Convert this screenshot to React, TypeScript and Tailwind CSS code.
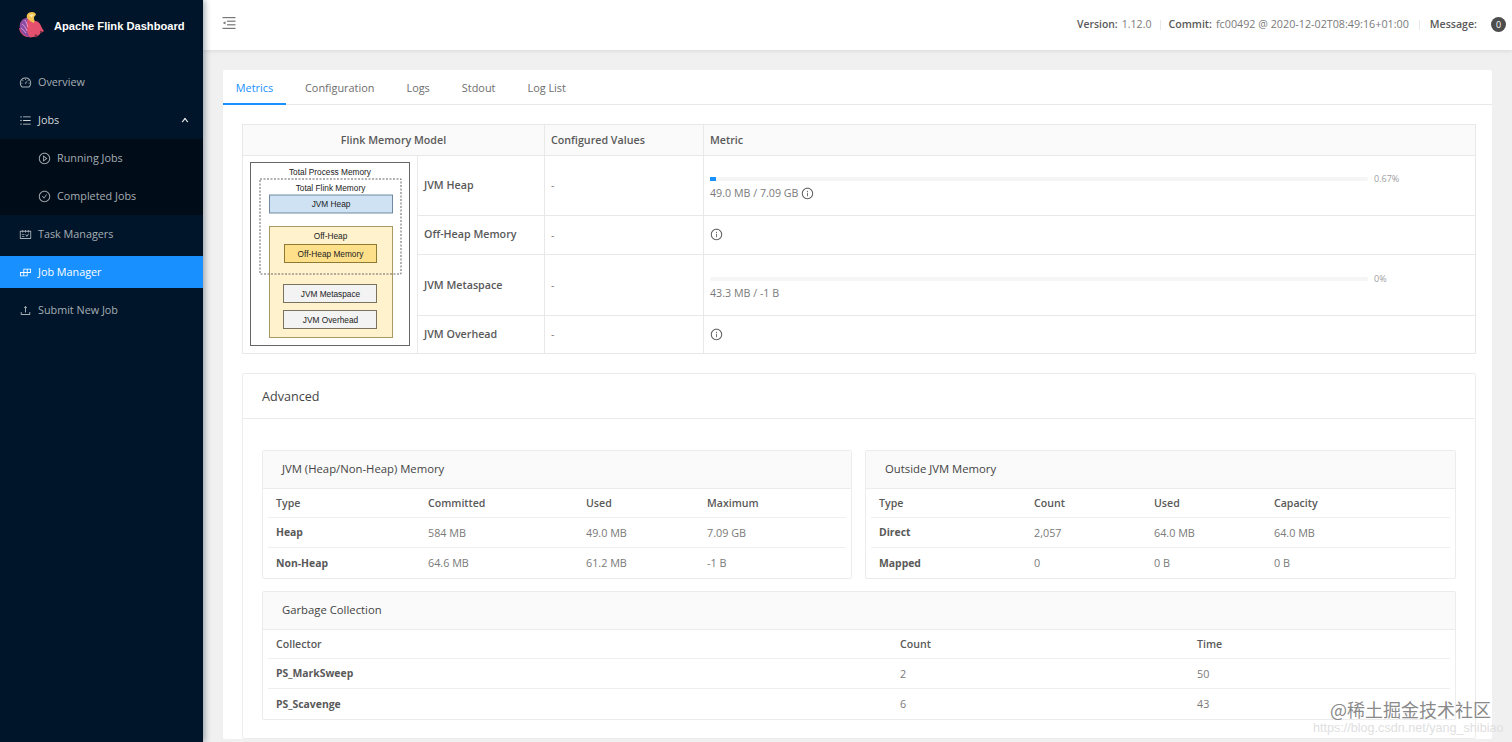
import {
  AiOutlineDashboard,
  AiOutlineUnorderedList,
  AiOutlinePlayCircle,
  AiOutlineCheckCircle,
  AiOutlineSchedule,
  AiOutlineBuild,
  AiOutlineUpload,
  AiOutlineInfoCircle,
  AiOutlineUp,
} from 'react-icons/ai'
import { ReactNode } from 'react'

const navText = 'flex items-center text-[10.8px] text-[#a6adb4]'

function NavItem({ icon, label, active, sub }: { icon: ReactNode; label: string; active?: boolean; sub?: boolean }) {
  return (
    <div className={`${navText} h-[32px] ${sub ? 'pl-[38px]' : 'pl-[19px]'} ${active ? 'bg-[#1890ff] text-white' : ''}`}>
      <span className="w-[19px] text-[13px] flex items-center">{icon}</span>
      {label}
    </div>
  )
}

// rough flink squirrel
function Logo() {
  return (
    <svg width="25" height="26" viewBox="0 0 25 26" className="shrink-0">
      <path d="M1 16C0 10 4 6 9 6c3 0 5 1 7 3 3 0 5 2 6 5 1 2 2 4 3 5-1 1-2 1-3 1-1 3-4 5-8 5-3 1-5 0-6 0-4-1-7-4-8-9z" fill="#e4506e" />
      <path d="M1 16C0 10 4 6 9 6c-1 4-2 6-1 10 0 4 1 7 3 9-1 0-2 0-3-1-4-1-6-4-7-8z" fill="#8a4ba3" />
      <path d="M3 12c2 1 4 4 5 7M2 16c2 1 3 3 5 5M6 8c1 2 2 4 3 7" stroke="#e8a6d8" strokeWidth="0.9" fill="none" />
      <path d="M8 6C7 3 9 0 13 0c2 0 4 1 4 3-1 1-2 1-2 3 0 2 1 3 0 5-3-1-5-3-7-5z" fill="#f2c14e" />
      <path d="M10 3c2-1 4-1 6 0-2 0-3 1-3 3-1-1-2-2-3-3z" fill="#fbe7a6" />
      <circle cx="17" cy="24" r="1.4" fill="#7a2f3f" />
      <circle cx="22" cy="20" r="1.2" fill="#7a2f3f" />
    </svg>
  )
}

function Sidebar() {
  return (
    <aside className="w-[203px] shrink-0 bg-[#001529] shadow-[2px_0_6px_rgba(0,21,41,0.35)] z-20 font-['Open_Sans',sans-serif]">
      <div className="h-[50px] flex items-center pl-[19px] gap-[10px]">
        <Logo />
        <span className="pt-[2px] text-white font-bold text-[11.15px] font-['Liberation_Sans',sans-serif] whitespace-nowrap">Apache Flink Dashboard</span>
      </div>
      <div className="flex flex-col gap-[6px] mt-[16px]">
        <NavItem icon={<AiOutlineDashboard />} label="Overview" />
        <div className="flex flex-col mb-[-3px]">
          <div className={`${navText} h-[32px] pl-[19px] pr-[14px] text-[#d5d8db]`}>
            <span className="w-[19px] text-[13px] flex items-center"><AiOutlineUnorderedList /></span>
            Jobs
            <AiOutlineUp className="ml-auto text-[8px] text-white stroke-[60]" />
          </div>
          <div className="bg-[#000c17] flex flex-col gap-[6px] py-[3px] mt-[3px]">
            <NavItem sub icon={<AiOutlinePlayCircle />} label="Running Jobs" />
            <NavItem sub icon={<AiOutlineCheckCircle />} label="Completed Jobs" />
          </div>
        </div>
        <NavItem icon={<AiOutlineSchedule />} label="Task Managers" />
        <NavItem active icon={<AiOutlineBuild />} label="Job Manager" />
        <NavItem icon={<AiOutlineUpload />} label="Submit New Job" />
      </div>
    </aside>
  )
}

function Header() {
  return (
    <header className="h-[50px] shrink-0 bg-white shadow-[0_1px_4px_rgba(0,21,41,0.1)] flex items-center pl-[19px] pr-[6px] text-[10.6px] text-[#595959] z-10">
      <svg width="14" height="14" viewBox="0 0 14 14" className="mb-[4px]" fill="#777">
        <rect x="0.5" y="1" width="13" height="1.2" />
        <rect x="5" y="4.6" width="8.5" height="1.2" />
        <rect x="5" y="8.2" width="8.5" height="1.2" />
        <rect x="0.5" y="11.8" width="13" height="1.2" />
        <path d="M3.5 5.2v3.4L0.8 6.9z" />
      </svg>
      <div className="ml-auto flex items-center mb-[1px]">
        <b className="font-semibold text-[10.4px]">Version:</b>
        <span className="ml-[4px] text-[#7a7a7a]">1.12.0</span>
        <span className="w-px h-[10px] bg-[#e8e8e8] mx-[8px]" />
        <b className="font-semibold">Commit:</b>
        <span className="ml-[4px] text-[10.75px] text-[#7a7a7a]">fc00492 @ 2020-12-02T08:49:16+01:00</span>
        <span className="w-px h-[10px] bg-[#e8e8e8] mx-[10px]" />
        <b className="font-semibold">Message:</b>
        <span className="ml-[14px] w-[15px] h-[15px] rounded-full bg-[#4d4d4d] text-white text-[9px] flex items-center justify-center">0</span>
      </div>
    </header>
  )
}

function MemoryModel() {
  const t = { fontFamily: 'Liberation Sans, sans-serif', fontSize: 8.3, fill: '#222', textAnchor: 'middle' as const }
  return (
    <svg width="160" height="184" viewBox="0 0 160 184" className="block">
      <rect x="0.5" y="0.5" width="159" height="183" fill="#fff" stroke="#666" />
      <text x="80" y="12.5" {...t}>Total Process Memory</text>
      <rect x="19.5" y="64.5" width="123" height="111" fill="#fff2cc" stroke="#a89a62" />
      <rect x="10" y="17" width="141" height="95" fill="none" stroke="#666" strokeDasharray="2 1.5" />
      <text x="80.5" y="28.5" {...t}>Total Flink Memory</text>
      <rect x="19.5" y="33" width="123" height="18" fill="#cfe2f3" stroke="#6f8aa0" />
      <text x="81" y="45" {...t}>JVM Heap</text>
      <text x="80.5" y="77" {...t}>Off-Heap</text>
      <rect x="34.5" y="82.5" width="92" height="18" fill="#ffe08a" stroke="#8f7a33" />
      <text x="80.5" y="95" {...t}>Off-Heap Memory</text>
      <rect x="33.5" y="122.5" width="93" height="18" fill="#f3f3f3" stroke="#77735f" />
      <text x="80.5" y="135" {...t}>JVM Metaspace</text>
      <rect x="33.5" y="148.5" width="93" height="18" fill="#f3f3f3" stroke="#77735f" />
      <text x="80.5" y="161" {...t}>JVM Overhead</text>
    </svg>
  )
}

function Progress({ pct, label, fill, info }: { pct: string; label: string; fill?: boolean; info?: boolean }) {
  return (
    <div className="pt-[3px]">
      <div className="flex items-center">
        <div className="w-[658px] h-[4px] bg-[#f5f5f5] rounded-full">
          {fill && <div className="w-[6px] h-[4px] bg-[#1890ff]" />}
        </div>
        <span className="ml-[6px] text-[9px] text-[#a0a0a0]">{pct}</span>
      </div>
      <div className="flex items-center gap-[2px] text-[#7a7a7a] mt-[-0.5px]">
        {label}
        {info && <AiOutlineInfoCircle className="text-[13px] text-[#555]" />}
      </div>
    </div>
  )
}

function MemoryTable() {
  const td = 'border-t border-l border-[#e8e8e8] px-[6px] align-middle'
  const name = `${td} text-[#595959] font-semibold`
  return (
    <table className="w-[1234px] border-separate border-spacing-0 border border-[#e8e8e8] text-[10.7px] table-fixed">
      <colgroup>
        <col className="w-[174px]" />
        <col className="w-[127px]" />
        <col className="w-[159px]" />
        <col />
      </colgroup>
      <thead>
        <tr className="h-[30px] bg-[#fafafa] text-[#595959]">
          <th colSpan={2} className="font-semibold">Flink Memory Model</th>
          <th className="border-l border-[#e8e8e8] text-left font-semibold px-[6px]">Configured Values</th>
          <th className="border-l border-[#e8e8e8] text-left font-semibold px-[6px]">Metric</th>
        </tr>
      </thead>
      <tbody>
        <tr className="h-[60px]">
          <td rowSpan={4} className="border-t border-[#e8e8e8] pl-[7px] align-top pt-[6px]"><MemoryModel /></td>
          <td className={name}>JVM Heap</td>
          <td className={`${td} text-[#7a7a7a]`}>-</td>
          <td className={td}><Progress fill info pct="0.67%" label="49.0 MB / 7.09 GB" /></td>
        </tr>
        <tr className="h-[39px]">
          <td className={`${name} pb-[2px]`}>Off-Heap Memory</td>
          <td className={`${td} text-[#7a7a7a]`}>-</td>
          <td className={`${td} pb-[2px]`}><AiOutlineInfoCircle className="text-[13px] text-[#555]" /></td>
        </tr>
        <tr className="h-[61px]">
          <td className={name}>JVM Metaspace</td>
          <td className={`${td} text-[#7a7a7a]`}>-</td>
          <td className={td}><Progress pct="0%" label="43.3 MB / -1 B" /></td>
        </tr>
        <tr className="h-[38px]">
          <td className={name}>JVM Overhead</td>
          <td className={`${td} text-[#7a7a7a]`}>-</td>
          <td className={td}><AiOutlineInfoCircle className="text-[13px] text-[#555]" /></td>
        </tr>
      </tbody>
    </table>
  )
}

function DataCard({ title, cols, rows, widths }: { title: string; cols: string[]; rows: string[][]; widths: string }) {
  return (
    <div className="border border-[#ececec] rounded-[2px]">
      <div className="h-[38px] bg-[#fafafa] border-b border-[#ececec] flex items-center pl-[19px] text-[11.3px] text-[#444]">{title}</div>
      <div className="px-[5px]">
        <div className={`grid ${widths} h-[29px] pt-[1px] items-center pl-[8px] border-b border-[#efefef] font-semibold text-[10.6px] text-[#595959]`}>
          {cols.map(c => <span key={c}>{c}</span>)}
        </div>
        {rows.map((r, i) => (
          <div key={r[0]} className={`grid ${widths} h-[30px] pt-[1px] items-center pl-[8px] ${i < rows.length - 1 ? 'border-b border-[#efefef]' : ''}`}>
            {r.map((v, j) => (
              <span key={j} className={j === 0 ? 'font-bold text-[10.4px] text-[#595959]' : 'text-[10.8px] text-[#7a7a7a]'}>{v}</span>
            ))}
          </div>
        ))}
      </div>
    </div>
  )
}

function Advanced() {
  return (
    <div className="mt-[19px] border border-[#ececec] rounded-[2px]">
      <div className="h-[45px] pt-[2px] border-b border-[#ececec] flex items-center pl-[19px] text-[12.6px] text-[#444]">Advanced</div>
      <div className="px-[19px] pt-[31px] pb-[18px] flex flex-col gap-[12px]">
        <div className="grid grid-cols-[590px_591px] gap-[13px]">
          <DataCard
            title="JVM (Heap/Non-Heap) Memory"
            widths="grid-cols-[152px_158px_121px_1fr]"
            cols={['Type', 'Committed', 'Used', 'Maximum']}
            rows={[['Heap', '584 MB', '49.0 MB', '7.09 GB'], ['Non-Heap', '64.6 MB', '61.2 MB', '-1 B']]}
          />
          <DataCard
            title="Outside JVM Memory"
            widths="grid-cols-[155px_120px_120px_1fr]"
            cols={['Type', 'Count', 'Used', 'Capacity']}
            rows={[['Direct', '2,057', '64.0 MB', '64.0 MB'], ['Mapped', '0', '0 B', '0 B']]}
          />
        </div>
        <DataCard
          title="Garbage Collection"
          widths="grid-cols-[624px_297px_1fr]"
          cols={['Collector', 'Count', 'Time']}
          rows={[['PS_MarkSweep', '2', '50'], ['PS_Scavenge', '6', '43']]}
        />
      </div>
    </div>
  )
}

export default function App() {
  const tabs = ['Configuration', 'Logs', 'Stdout', 'Log List']
  return (
    <div className="relative w-[1512px] h-[742px] overflow-hidden flex bg-[#f0f0f0] font-['Open_Sans',sans-serif]">
      <Sidebar />
      <main className="flex-1 min-w-0 flex flex-col">
        <Header />
        <div className="pl-[20px] pr-[20px] pt-[20px]">
          <div className="bg-white rounded-[2px]">
            <div className="h-[35px] border-b border-[#e8e8e8] flex text-[10.9px] text-[#6e6e6e]">
              <div className="h-[35px] w-[63px] border-b-2 border-[#1890ff] text-[#1890ff] font-medium flex items-center justify-center pt-[3px]">Metrics</div>
              <div className="flex items-center gap-[32px] ml-[19px] pt-[2px]">
                {tabs.map(t => <span key={t}>{t}</span>)}
              </div>
            </div>
            <div className="pt-[19px] pl-[19px]">
              <MemoryTable />
              <div className="w-[1234px]">
                <Advanced />
              </div>
            </div>
          </div>
        </div>
      </main>
      <div className="absolute left-[1330px] top-[696px] text-[18px] text-[#8a8a8a] whitespace-nowrap font-['Noto_Sans_CJK_SC',sans-serif]">@稀土掘金技术社区</div>
      <div className="absolute left-[1313px] top-[719px] text-[12.6px] text-[#e0e0e0] whitespace-nowrap font-['Liberation_Sans',sans-serif]">https://blog.csdn.net/yang_shibiao</div>
    </div>
  )
}
